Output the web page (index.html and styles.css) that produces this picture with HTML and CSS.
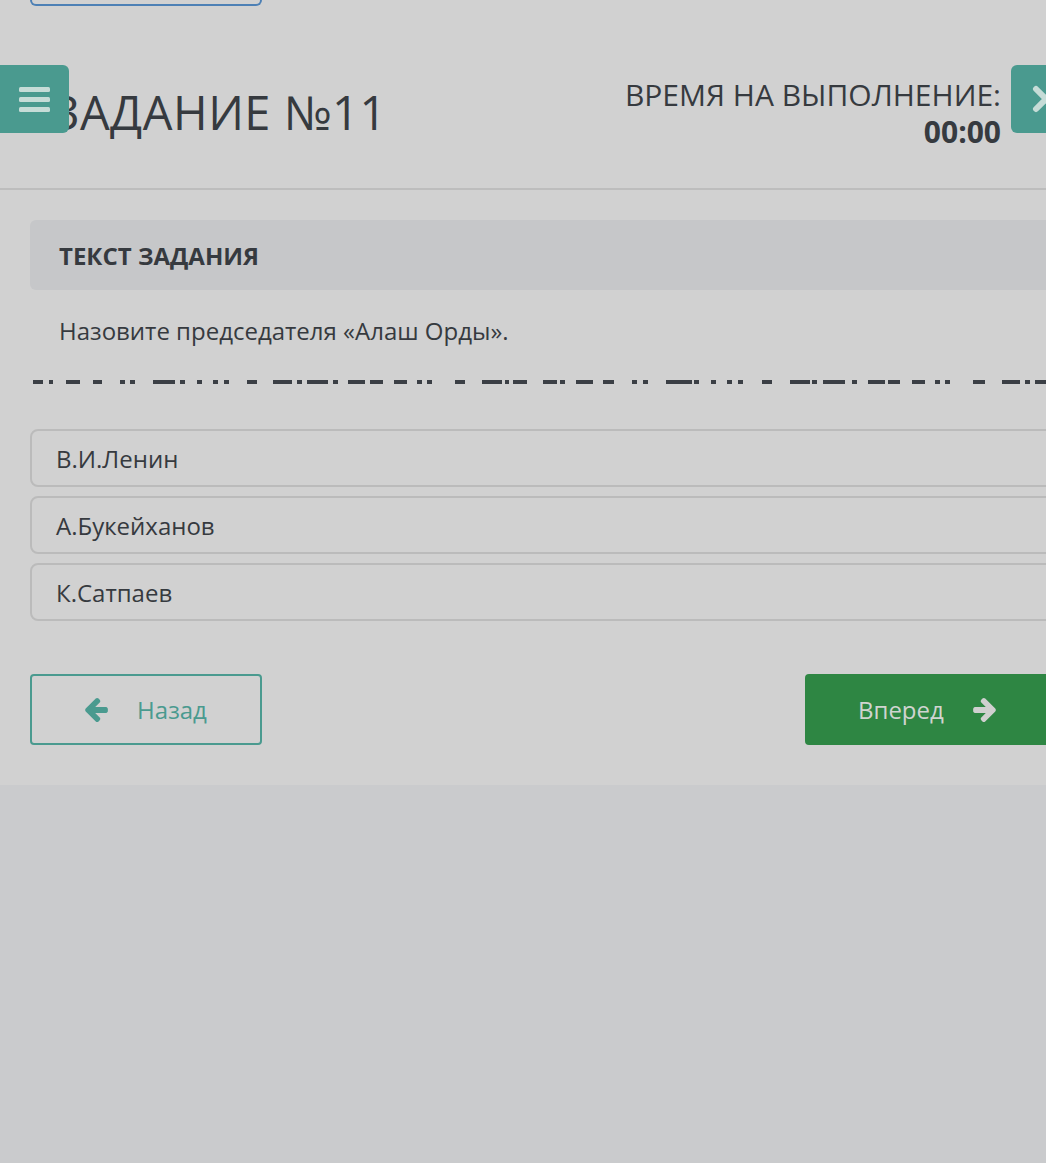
FILE: index.html
```html
<!DOCTYPE html>
<html lang="ru">
<head>
    <meta charset="UTF-8">
    <title>Задание №11</title>
    <link rel="stylesheet" href="styles.css">
</head>
<body>
    <div class="panel">
        <div class="prev-btn"></div>

        <!-- Шапка задания -->
        <div class="task-header">
            <h1 class="task-title">ЗАДАНИЕ №11</h1>
            <div class="timer">
                ВРЕМЯ НА ВЫПОЛНЕНИЕ:<br>
                <strong>00:00</strong>
            </div>

            <button class="side-btn menu-btn" aria-label="Меню">
                <svg width="31" height="25" viewBox="0 0 31 25">
                    <rect x="0" y="0" width="31" height="5" rx="1.5"/>
                    <rect x="0" y="10" width="31" height="5" rx="1.5"/>
                    <rect x="0" y="20" width="31" height="5" rx="1.5"/>
                </svg>
            </button>
            <button class="side-btn close-btn" aria-label="Закрыть">
                <svg width="30" height="30" viewBox="0 0 30 30">
                    <path d="M5 5 L25 25 M25 5 L5 25"/>
                </svg>
            </button>
        </div>

        <div class="task-body">
            <div class="section-title">ТЕКСТ ЗАДАНИЯ</div>
            <p class="question">Назовите председателя «Алаш Орды».</p>

            <svg class="dashes" width="1100" height="6" viewBox="0 0 1100 6">
                <g>
                    <rect x="33" y="1" width="10" height="4"/><rect x="49" y="1" width="4" height="4"/>
                    <rect x="66" y="1" width="14" height="4"/><rect x="93" y="1" width="9" height="4"/>
                    <rect x="120" y="1" width="5" height="4"/><rect x="130" y="1" width="5" height="4"/>
                    <rect x="153" y="1" width="22" height="4"/><rect x="180" y="1" width="5" height="4"/>
                    <rect x="197" y="1" width="5" height="4"/><rect x="213" y="1" width="5" height="4"/>
                    <rect x="224" y="1" width="5" height="4"/><rect x="247" y="1" width="10" height="4"/>
                    <rect x="273" y="1" width="19" height="4"/><rect x="297" y="1" width="5" height="4"/>
                    <rect x="307" y="1" width="21" height="4"/><rect x="333" y="1" width="5" height="4"/>
                    <rect x="348" y="1" width="17" height="4"/><rect x="370" y="1" width="13" height="4"/>
                    <rect x="394" y="1" width="13" height="4"/><rect x="417" y="1" width="5" height="4"/>
                    <rect x="427" y="1" width="5" height="4"/><rect x="455" y="1" width="10" height="4"/>
                    <rect x="482" y="1" width="20" height="4"/><rect x="505" y="1" width="4" height="4"/>
                    <rect x="513" y="1" width="14" height="4"/><rect x="543" y="1" width="14" height="4"/>
                    <rect x="560" y="1" width="5" height="4"/><rect x="576" y="1" width="17" height="4"/>
                    <rect x="603" y="1" width="11" height="4"/><rect x="632" y="1" width="5" height="4"/>
                    <rect x="643" y="1" width="5" height="4"/><rect x="666" y="1" width="26" height="4"/>
                    <rect x="694" y="1" width="5" height="4"/><rect x="711" y="1" width="5" height="4"/>
                    <rect x="727" y="1" width="5" height="4"/><rect x="738" y="1" width="5" height="4"/>
                    <rect x="762" y="1" width="10" height="4"/><rect x="790" y="1" width="20" height="4"/>
                    <rect x="812" y="1" width="5" height="4"/><rect x="823" y="1" width="22" height="4"/>
                    <rect x="852" y="1" width="5" height="4"/><rect x="868" y="1" width="17" height="4"/>
                    <rect x="888" y="1" width="12" height="4"/><rect x="912" y="1" width="13" height="4"/>
                    <rect x="935" y="1" width="5" height="4"/><rect x="945" y="1" width="5" height="4"/>
                    <rect x="973" y="1" width="12" height="4"/><rect x="1002" y="1" width="18" height="4"/>
                    <rect x="1025" y="1" width="5" height="4"/><rect x="1035" y="1" width="25" height="4"/>
                </g>
            </svg>

            <!-- Варианты ответа -->
            <div class="answers">
                <div class="answer">В.И.Ленин</div>
                <div class="answer">А.Букейханов</div>
                <div class="answer">К.Сатпаев</div>
            </div>

            <div class="nav">
                <button class="nav-btn back">
                    <svg class="arrow" width="23" height="24" viewBox="64 -74 1472 1557"><path d="M1536 640v128q0 53-32.5 90.5t-84.5 37.5h-704l293 294q38 36 38 90t-38 90l-75 76q-37 37-90 37-52 0-91-37l-651-651q-37-37-37-90 0-52 37-91l651-650q38-38 91-38 52 0 90 38l75 74q38 38 38 91t-38 91l-293 293h704q52 0 84.5 37.5t32.5 90.5z"/></svg>
                    Назад
                </button>
                <button class="nav-btn next">
                    Вперед
                    <svg class="arrow flip" width="23" height="24" viewBox="64 -74 1472 1557"><path d="M1536 640v128q0 53-32.5 90.5t-84.5 37.5h-704l293 294q38 36 38 90t-38 90l-75 76q-37 37-90 37-52 0-91-37l-651-651q-37-37-37-90 0-52 37-91l651-650q38-38 91-38 52 0 90 38l75 74q38 38 38 91t-38 91l-293 293h704q52 0 84.5 37.5t32.5 90.5z"/></svg>
                </button>
            </div>
        </div>
    </div>
</body>
</html>
```

FILE: styles.css
```css
body {
    margin: 0;
    background: #cacbcd;
    font-family: 'Open Sans', 'Noto Sans', sans-serif;
    color: #363a3f;
    overflow-x: hidden;
}

.panel {
    width: 1100px;
    background: #d1d1d1;
    box-shadow: 0 2px 5px rgba(0,0,0,0.18);
    padding-bottom: 40px;
}

.prev-btn {
    width: 228px;
    height: 4px;
    margin-left: 30px;
    border: 2px solid #4d80b5;
    border-top: none;
    border-radius: 0 0 6px 6px;
}

/* Шапка */
.task-header {
    position: relative;
    display: flex;
    justify-content: space-between;
    align-items: flex-start;
    padding: 70px 99px 38px 52px;
    border-bottom: 2px solid #bdbdbd;
}

.task-title {
    margin: 8px 0 0;
    font-size: 47px;
    font-weight: 400;
    line-height: 56px;
    letter-spacing: 0.5px;
}

.timer {
    text-align: right;
    font-size: 30px;
    line-height: 37px;
}

.timer strong {
    font-weight: 700;
}

.side-btn {
    position: absolute;
    top: 59px;
    height: 68px;
    border: none;
    border-radius: 6px;
    background: #4a9a8f;
    padding: 0;
    display: flex;
    align-items: center;
}

.menu-btn {
    left: -10px;
    width: 79px;
    padding-left: 29px;
}

.menu-btn svg {
    fill: #c6dcd7;
}

.close-btn {
    left: 1011px;
    width: 70px;
    padding-left: 20px;
}

.close-btn svg {
    stroke: #c6dcd7;
    stroke-width: 6;
    stroke-linecap: round;
    fill: none;
}

/* Тело задания */
.task-body {
    padding: 30px 30px 0;
}

.section-title {
    height: 70px;
    display: flex;
    align-items: center;
    padding-left: 29px;
    background: #c6c7c9;
    border-radius: 6px;
    font-size: 24px;
    font-weight: 700;
}

.question {
    margin: 25px 0 0 29px;
    font-size: 24px;
    line-height: 32px;
}

.dashes {
    display: block;
    margin: 32px 0 0 -30px;
    fill: #3b3f45;
}

.answers {
    margin-top: 44px;
    display: flex;
    flex-direction: column;
    gap: 9px;
}

.answer {
    height: 54px;
    display: flex;
    align-items: center;
    padding-left: 24px;
    border: 2px solid #bbbbbb;
    border-radius: 8px;
    font-size: 24px;
}

.nav {
    margin-top: 53px;
    display: flex;
    justify-content: space-between;
}

.nav-btn {
    height: 71px;
    display: flex;
    align-items: center;
    gap: 29px;
    font-family: inherit;
    font-size: 24px;
    border-radius: 4px;
    cursor: pointer;
}

.back {
    width: 232px;
    justify-content: center;
    background: transparent;
    border: 2px solid #4a9a8f;
    color: #4a9a8f;
}

.back svg {
    fill: #4a9a8f;
}

.next {
    width: 265px;
    padding-left: 53px;
    background: #2e8643;
    border: none;
    color: #d0d4d0;
}

.next svg {
    fill: #d0d0d0;
}

.flip {
    transform: scaleX(-1);
}
```
